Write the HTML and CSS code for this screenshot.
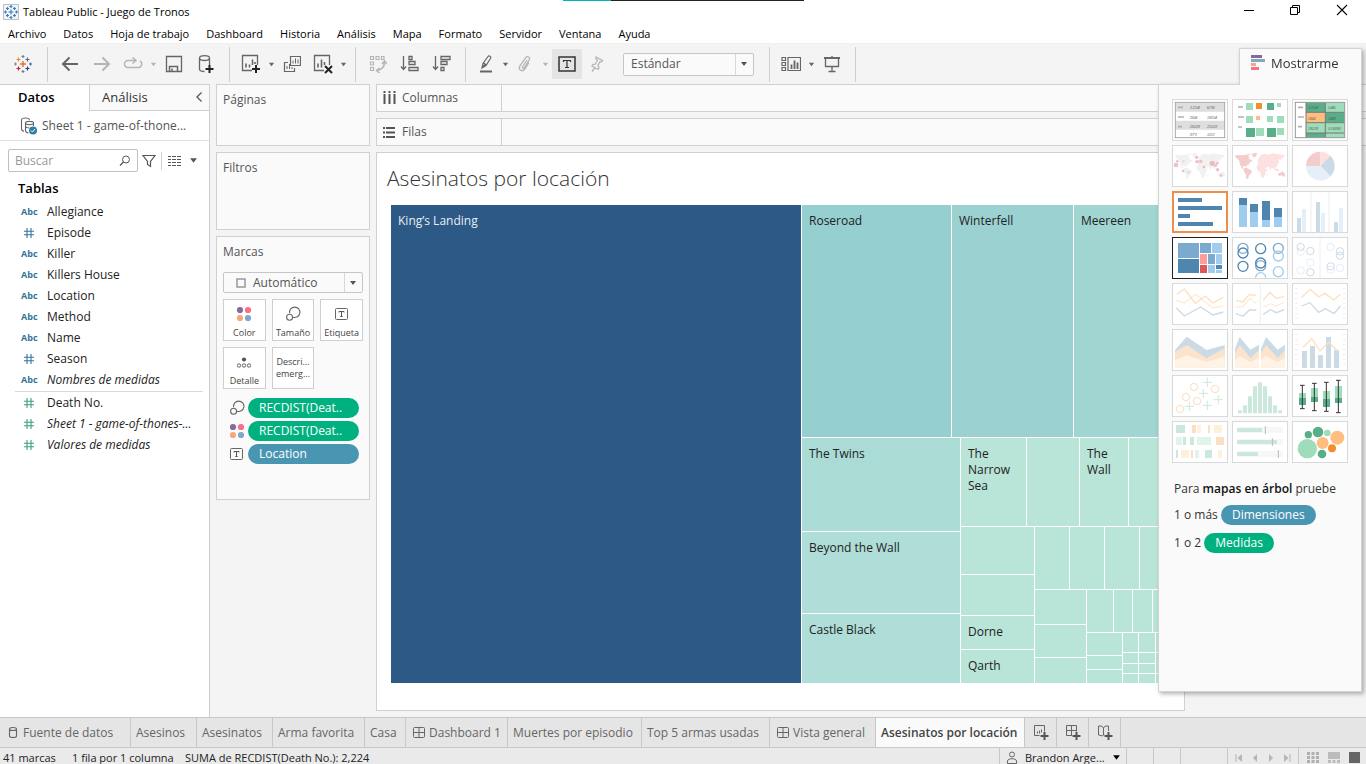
FILE: index.html
```html
<!DOCTYPE html>
<html lang="es">
<head>
<meta charset="utf-8">
<title>Tableau Public - Juego de Tronos</title>
<link rel="stylesheet" href="styles.css">
</head>
<body>
<svg class="defs" width="0" height="0" aria-hidden="true">
  <defs>
    <symbol id="i-hash" viewBox="0 0 12 12"><path d="M4 1v10M8 1v10M1 4.2h10M1 7.8h10" fill="none" stroke="currentColor" stroke-width="1.1"/></symbol>
    <symbol id="i-size" viewBox="0 0 16 16"><g fill="none" stroke="#666" stroke-width="1.1"><path d="M4.6 7.2A5.2 5.2 0 1 1 8 11.2"/><circle cx="4.6" cy="11.3" r="3"/></g></symbol>
    <symbol id="i-color" viewBox="0 0 16 16"><circle cx="4" cy="4" r="3.1" fill="#876a9b"/><circle cx="12" cy="4" r="3.1" fill="#fb6f82"/><circle cx="4" cy="12" r="3.1" fill="#f3a97b"/><circle cx="12" cy="12" r="3.1" fill="#80a6c8"/></symbol>
    <symbol id="i-text" viewBox="0 0 16 16"><rect x="1.5" y="2.5" width="12" height="11" rx="1" fill="none" stroke="#666"/><path d="M5 6.5V5.5h5v1M7.5 5.5v5M6.3 10.5h2.4" fill="none" stroke="#555"/></symbol>
    <symbol id="i-caret" viewBox="0 0 8 8"><path d="M1 2h6L4 6z" fill="currentColor"/></symbol>
    <symbol id="i-grid" viewBox="0 0 12 12"><rect x=".5" y=".5" width="11" height="10" rx="1" fill="none" stroke="#666"/><path d="M6 .5v10M.5 5.5h11" stroke="#666"/></symbol>
    <symbol id="i-world-w" viewBox="0 0 168 126"><path d="M8 34l6-4 14 1 12-2 8 2 4 6-2 5 8 2 4 4-8 4-4 7-6 2-2 6-4-4-6 1 2 7 6 3 2 3-6-1-8-8-4-10-2-10-6-6zM44 26h12l-3 4-8-1zM58 28l10-4 8 1-4 9-7 4-3-6zM36 70l8-2 10 6 6 4-3 8-6 5-2 8-4 4-3-4 0-10-6-9z"/></symbol>
    <symbol id="i-world-e" viewBox="0 0 168 126"><path d="M78 44l6-10 6-6 10-1 10 2 12-4 16 3 20 2-2 5-5 3-3 7-5-4-3 6 2 5-5 4-1 8-6 3-2 9-4-6-5-3-3 10-5-10-4-3-5 6-4-5-2-4-8 1-5-3-6 2 1-6zM74 64l6-5 9 1 8 2 4 9 6 2-6 8-2 9-6 9-4-1-3-10-1-8-7-2-4-6zM104 88l3-2-1 6-3 1z"/></symbol>
    <symbol id="i-world-o" viewBox="0 0 168 126"><path d="M138 86l5-3 6-1 3-3 4 4 4 6-3 6-5-1-4-3-8 2zM128 70l8 3 6 3-3 2-8-3z"/></symbol>
  </defs>
</svg>

<div class="share-strip"></div>

<header class="titlebar">
  <svg class="app-icon" width="16" height="16" viewBox="0 0 16 16" aria-hidden="true"><rect x=".5" y=".5" width="15" height="15" fill="#f2f4f8" stroke="#bcc1c8"/><g stroke="#3b80b8" fill="none" stroke-width="1.2"><path d="M8 5.5v5M5.500 8h5M8 1v3M6.500 2.500h3M8 12v3M6.500 13.500h3M1 8h3M2.500 6.500v3M12 8h3M13.500 6.500v3M4.500 3v3M3 4.500h3M11.500 3v3M10 4.500h3M4.500 10v3M3 11.500h3M11.500 10v3M10 11.500h3"/></g></svg>
  <span class="app-title">Tableau Public - Juego de Tronos</span>
  <div class="window-controls">
    <button aria-label="Minimizar"><svg width="12" height="12"><path d="M1 6.500h10" stroke="#000"/></svg></button>
    <button aria-label="Restaurar"><svg width="12" height="12"><path d="M1.500 3.500h7v7h-7zM3.500 3.500v-2h7v7h-2" fill="none" stroke="#000"/></svg></button>
    <button aria-label="Cerrar"><svg width="12" height="12"><path d="M1 1l10 10M11 1L1 11" stroke="#000" stroke-width="1.100"/></svg></button>
  </div>
</header>

<nav class="menubar" aria-label="Menú">
  <button>Archivo</button><button>Datos</button><button>Hoja de trabajo</button><button>Dashboard</button><button>Historia</button><button>Análisis</button><button>Mapa</button><button>Formato</button><button>Servidor</button><button>Ventana</button><button>Ayuda</button>
</nav>

<div class="toolbar" role="toolbar" aria-label="Herramientas">
  <div class="tool-group home">
    <button class="tool" aria-label="Página de inicio"><svg width="18" height="18" viewBox="0 0 18 18"><g fill="none" stroke-width="1.200"><path d="M9 6v6M6 9h6" stroke="#e8762d" stroke-width="1.500"/><path d="M4.500 2.500v4M2.500 4.500h4" stroke="#e98b3e"/><path d="M13.500 2.500v4M11.500 4.500h4" stroke="#5b6591"/><path d="M4.500 11.500v4M2.500 13.500h4" stroke="#c72035"/><path d="M13.500 11.500v4M11.500 13.500h4" stroke="#1f457e"/><path d="M9 0v3M7.500 1.500h3" stroke="#59879b"/><path d="M9 15v3M7.500 16.500h3" stroke="#59879b"/><path d="M0 9h3M1.500 7.500v3" stroke="#7099a6"/><path d="M15 9h3M16.500 7.500v3" stroke="#5b6591"/></g></svg></button>
  </div>
  <div class="tool-group">
    <button class="tool" aria-label="Deshacer"><svg width="18" height="16"><path d="M17 8H2M8.500 1.500L2 8l6.500 6.500" fill="none" stroke="#666" stroke-width="2"/></svg></button>
    <button class="tool dim" aria-label="Rehacer"><svg width="18" height="16"><path d="M1 8h15M9.500 1.500L16 8l-6.500 6.500" fill="none" stroke="#b5b5b5" stroke-width="2"/></svg></button>
    <button class="tool split" aria-label="Repetir"><svg width="20" height="14"><path d="M12 3.500H5a3.500 3.500 0 0 0 0 7h10a3.500 3.500 0 0 0 2-6.500M9.500.5l3.500 3-3.500 3" fill="none" stroke="#b5b5b5" stroke-width="1.500"/></svg></button>
    <button class="caret dim" aria-label="Opciones de repetir"><svg width="7" height="7"><use href="#i-caret"/></svg></button>
    <button class="tool" aria-label="Guardar"><svg width="18" height="18"><path d="M1.500 1.500h15v15h-15z" fill="none" stroke="#666" stroke-width="1.300"/><path d="M4.500 16v-4.500h8V16M7 16v-2.500" fill="none" stroke="#666" stroke-width="1.500"/></svg></button>
    <button class="tool" aria-label="Nueva fuente de datos"><svg width="18" height="20"><path d="M2.500 4v11c0 1.500 2 2.500 5 2.500M12.500 4v7M2.500 4c0-3.300 10-3.300 10 0s-10 3.300-10 0" fill="none" stroke="#666" stroke-width="1.300"/><path d="M12.500 11v8M8.500 15h8" stroke="#222" stroke-width="2"/></svg></button>
  </div>
  <div class="tool-group">
    <button class="tool split" aria-label="Nueva hoja de trabajo"><svg width="20" height="20"><path d="M11 16.500H1.500v-15h15V11" fill="none" stroke="#666" stroke-width="1.300"/><path d="M5 13.500v-4M8.500 13.500v-3M11.500 11V5.500M14 10V8" stroke="#666" stroke-width="1.600"/><path d="M15 11v8M11 15h8" stroke="#222" stroke-width="2"/></svg></button>
    <button class="caret" aria-label="Opciones de hoja"><svg width="7" height="7"><use href="#i-caret"/></svg></button>
    <button class="tool" aria-label="Duplicar"><svg width="18" height="18"><path d="M7.500 1.500h10v9h-10zM5 7.500H1.500v9h10V13" fill="none" stroke="#666" stroke-width="1.200"/><path d="M10 8.500v-3M12.500 8.500v-5M15 8.500v-4M4 14v-3M6.500 14V9M9 14v-2" stroke="#666"/></svg></button>
    <button class="tool split" aria-label="Borrar hoja"><svg width="20" height="20"><path d="M11 16.500H1.500v-15h15V11" fill="none" stroke="#666" stroke-width="1.300"/><path d="M5 13.500v-4M8.500 13.500v-8M11.500 11V8" stroke="#666" stroke-width="1.600"/><path d="M12 12l7 7M19 12l-7 7" stroke="#222" stroke-width="2"/></svg></button>
    <button class="caret" aria-label="Opciones de borrar"><svg width="7" height="7"><use href="#i-caret"/></svg></button>
  </div>
  <div class="tool-group">
    <button class="tool" aria-label="Intercambiar"><svg width="18" height="18"><g fill="none" stroke="#b5b5b5" stroke-width="1.200"><path d="M1.500 1.500h3v3h-3zM7 1.500h3v3H7zM12.500 1.500h2.500v3h-2.500zM1.500 7h3v3h-3zM1.500 12.500h3v3h-3z"/><path d="M15.500 7c0 5-3 8-8 8.500M13 9l2.500-3L18 9M10.500 13l-3 2.500 3 2.500" stroke-width="1.500"/></g></svg></button>
    <button class="tool" aria-label="Orden ascendente"><svg width="20" height="18"><g fill="none" stroke="#666" stroke-width="1.300"><path d="M3.500 1v13M1 11.500l2.500 3 2.500-3"/><path d="M9 1.500h3v3H9zM9 6.500h6v3H9zM9 12.500h9v3H9z"/></g></svg></button>
    <button class="tool" aria-label="Orden descendente"><svg width="20" height="18"><g fill="none" stroke="#666" stroke-width="1.300"><path d="M3.500 1v13M1 11.500l2.500 3 2.500-3"/><path d="M9 1.500h9v3H9zM9 6.500h6v3H9zM9 12.500h3v3H9z"/></g></svg></button>
  </div>
  <div class="tool-group">
    <button class="tool tight" aria-label="Resaltar"><svg width="16" height="20"><path d="M4 14l1-4.500L10 2.500c1-1.400 3.500.3 2.600 1.800L8 11.500zM5.500 9l3 2M4 14l3.500-4" fill="none" stroke="#666" stroke-width="1.200"/><path d="M2 17.500h12" stroke="#666" stroke-width="2"/></svg></button>
    <button class="caret" aria-label="Opciones de resaltar"><svg width="7" height="7"><use href="#i-caret"/></svg></button>
    <button class="tool split" aria-label="Agrupar"><svg width="16" height="18"><path d="M10 5l-4.500 7c-.6 1.200 1 2 1.700 1l5-8c1.500-2.600-2-4.800-3.600-2.200L2.800 11c-2 3.600 2.700 6.600 5 3.200L12 7.500" fill="none" stroke="#b5b5b5" stroke-width="1.300"/></svg></button>
    <button class="caret dim" aria-label="Opciones de agrupar"><svg width="7" height="7"><use href="#i-caret"/></svg></button>
    <button class="tool active" aria-label="Mostrar etiquetas"><svg width="18" height="16"><path d="M1 1h16v14H1z" fill="none" stroke="#333" stroke-width="1.500"/><path d="M5.500 6V4.500h7V6M9 4.500v7M7 11.500h4" fill="none" stroke="#333" stroke-width="1.200"/></svg></button>
    <button class="tool pin" aria-label="Fijar ejes"><svg width="14" height="18"><path d="M6 2l6.500 3.500-1 1.500-1.500-.5-2 4 1 2.500-1 1.500L2 11l.8-1.600 2.600-.2 2-4L6 3.700zM5 12.500L2 16.500" fill="none" stroke="#b5b5b5" stroke-width="1.300"/></svg></button>
    <div class="select-box fit">
      <select aria-label="Ajuste"><option>Estándar</option></select>
      <svg width="8" height="8"><use href="#i-caret"/></svg>
    </div>
  </div>
  <div class="tool-group last">
    <button class="tool split" aria-label="Tarjetas"><svg width="20" height="16"><g fill="none" stroke="#666" stroke-width="1.200"><path d="M1 1.500h3.500v3H1zM1 6.500h3.500v3H1zM1 11.500h3.500v3H1zM7 1.500h12.500v13H7z"/><path d="M10.500 13V8.500M13.500 13V4.500M16.500 13V6.500" stroke-width="1.800"/></g></svg></button>
    <button class="caret" aria-label="Opciones de tarjetas"><svg width="7" height="7"><use href="#i-caret"/></svg></button>
    <button class="tool" aria-label="Presentación"><svg width="18" height="18"><path d="M1 3h16" stroke="#666" stroke-width="2"/><path d="M2.500 4v7.500h13V4M9 1v2M9 11.500v5M5.500 16.500h7" fill="none" stroke="#666" stroke-width="1.300"/></svg></button>
  </div>
</div>

<main class="workspace">
  <aside class="data-pane">
    <div class="pane-tabs">
      <button class="pane-tab selected">Datos</button>
      <button class="pane-tab other">Análisis <svg width="8" height="12"><path d="M6.500 1.500L2 6l4.500 4.500" fill="none" stroke="#555" stroke-width="1.300"/></svg></button>
    </div>
    <button class="source"><svg width="18" height="18"><g fill="none" stroke="#666" stroke-width="1.100"><path d="M1.500 3v9c0 1.200 1 2 2.500 2.300M1.500 3c0-2.600 8-2.600 8 0M5.500 6v7.500c0 1.300 1.200 2.200 3 2.500M5.500 6c0-2.200 8-2.200 8 0s-8 2.200-8 0M13.500 6v3M5.500 9.500c.5 1 2 1.500 4 1.500"/></g><circle cx="13" cy="13.500" r="4" fill="#2f7ea3"/><path d="M11 13.500l1.500 1.500 2.500-3" fill="none" stroke="#fff"/></svg><span>Sheet 1 - game-of-thone...</span></button>
    <div class="search-row">
      <label class="search"><input type="text" placeholder="Buscar" aria-label="Buscar"><svg width="12" height="12"><circle cx="7" cy="4.500" r="3.500" fill="none" stroke="#555"/><path d="M4.500 7L1 10.500" stroke="#555" stroke-width="1.300"/></svg></label>
      <button class="plain" aria-label="Filtrar"><svg width="14" height="14"><path d="M1 1.500h12L8.500 7.500v5l-3-2v-3z" fill="none" stroke="#555" stroke-width="1.200"/></svg></button>
      <span class="bar"></span>
      <button class="plain" aria-label="Vista"><svg width="13" height="12"><path d="M0 1.500h13M0 4.500h13M0 7.500h13M0 10.500h13" stroke="#555" stroke-dasharray="3 1 4 1 4"/></svg></button>
      <button class="plain more" aria-label="Más"><svg width="9" height="9"><use href="#i-caret"/></svg></button>
    </div>
    <h2>Tablas</h2>
    <ul class="fields">
      <li><b>Abc</b>Allegiance</li>
      <li><i class="hash"><svg width="12" height="12"><use href="#i-hash"/></svg></i>Episode</li>
      <li><b>Abc</b>Killer</li>
      <li><b>Abc</b>Killers House</li>
      <li><b>Abc</b>Location</li>
      <li><b>Abc</b>Method</li>
      <li><b>Abc</b>Name</li>
      <li><i class="hash"><svg width="12" height="12"><use href="#i-hash"/></svg></i>Season</li>
      <li><b>Abc</b><em>Nombres de medidas</em></li>
    </ul>
    <ul class="fields measures">
      <li><i class="hash"><svg width="12" height="12"><use href="#i-hash"/></svg></i>Death No.</li>
      <li><i class="hash"><svg width="12" height="12"><use href="#i-hash"/></svg></i><em>Sheet 1 - game-of-thones-...</em></li>
      <li><i class="hash"><svg width="12" height="12"><use href="#i-hash"/></svg></i><em>Valores de medidas</em></li>
    </ul>
  </aside>

  <section class="cards">
    <div class="card pages"><h3>Páginas</h3></div>
    <div class="card filters"><h3>Filtros</h3></div>
    <div class="card marks">
      <h3>Marcas</h3>
      <div class="select-box mark-type">
        <svg class="square" width="10" height="10"><path d="M1 1h8v8H1z" fill="none" stroke="#999" stroke-width="1.500"/></svg>
        <select aria-label="Tipo de marca"><option>Automático</option></select>
        <svg width="8" height="8"><use href="#i-caret"/></svg>
      </div>
      <div class="mark-buttons">
        <button><svg width="16" height="16"><use href="#i-color"/></svg>Color</button>
        <button><svg width="16" height="16"><use href="#i-size"/></svg>Tamaño</button>
        <button><svg width="16" height="16"><use href="#i-text"/></svg>Etiqueta</button>
        <button><svg width="16" height="16"><g fill="none" stroke="#666"><circle cx="3" cy="11.500" r="1.700"/><circle cx="8" cy="11.500" r="1.700"/><circle cx="13" cy="11.500" r="1.700"/></g><circle cx="8" cy="5.500" r="2.100" fill="#555"/></svg>Detalle</button>
        <button class="text-only">Descri...<br>emerg...</button>
      </div>
      <ul class="pills">
        <li><svg width="16" height="16"><use href="#i-size"/></svg><span class="pill green">RECDIST(Deat..</span></li>
        <li><svg width="16" height="16"><use href="#i-color"/></svg><span class="pill green">RECDIST(Deat..</span></li>
        <li><svg width="16" height="16"><use href="#i-text"/></svg><span class="pill blue">Location</span></li>
      </ul>
    </div>
  </section>

  <section class="sheet">
    <div class="shelf"><h3><svg width="14" height="14"><path d="M2.500 0v2M7.500 0v2M12.500 0v2M2.500 3v10M7.500 3v10M12.500 3v10" stroke="#555" stroke-width="2"/></svg>Columnas</h3></div>
    <div class="shelf"><h3><svg width="14" height="14"><path d="M1 3h2M1 7.500h2M1 12h2M4 3h9M4 7.500h9M4 12h9" stroke="#555" stroke-width="2"/></svg>Filas</h3></div>
    <div class="canvas">
      <h1>Asesinatos por locación</h1>
      <div class="treemap">
        <div class="cell navy" style="flex-grow:410"><span>King’s Landing</span></div>
        <div class="col" style="flex-grow:372">
          <div class="row" style="flex-grow:232">
            <div class="cell t1" style="flex-grow:149"><span>Roseroad</span></div>
            <div class="cell t2" style="flex-grow:121"><span>Winterfell</span></div>
            <div class="cell t3" style="flex-grow:100"><span>Meereen</span></div>
          </div>
          <div class="row" style="flex-grow:245">
            <div class="col" style="flex-grow:158">
              <div class="cell t4" style="flex-grow:93"><span>The Twins</span></div>
              <div class="cell t5" style="flex-grow:81"><span>Beyond the Wall</span></div>
              <div class="cell t5" style="flex-grow:69"><span>Castle Black</span></div>
            </div>
            <div class="col" style="flex-grow:213">
              <div class="row" style="flex-grow:88">
                <div class="cell" style="flex-grow:65"><span>The Narrow Sea</span></div>
                <div class="cell" style="flex-grow:52"></div>
                <div class="cell" style="flex-grow:48"><span>The Wall</span></div>
                <div class="cell" style="flex-grow:45"></div>
              </div>
              <div class="row" style="flex-grow:156">
                <div class="col" style="flex-grow:73">
                  <div class="cell" style="flex-grow:47"></div>
                  <div class="cell" style="flex-grow:40"></div>
                  <div class="cell" style="flex-grow:33"><span>Dorne</span></div>
                  <div class="cell" style="flex-grow:33"><span>Qarth</span></div>
                </div>
                <div class="col" style="flex-grow:139">
                  <div class="row" style="flex-grow:62">
                    <div class="cell" style="flex-grow:34"></div>
                    <div class="cell" style="flex-grow:34"></div>
                    <div class="cell" style="flex-grow:34"></div>
                    <div class="cell" style="flex-grow:34"></div>
                  </div>
                  <div class="row" style="flex-grow:93">
                    <div class="col" style="flex-grow:51">
                      <div class="cell" style="flex-grow:34"></div>
                      <div class="cell" style="flex-grow:32"></div>
                      <div class="cell" style="flex-grow:25"></div>
                    </div>
                    <div class="col" style="flex-grow:87">
                      <div class="row" style="flex-grow:42">
                        <div class="cell" style="flex-grow:26"></div>
                        <div class="cell" style="flex-grow:18"></div>
                        <div class="cell" style="flex-grow:19"></div>
                        <div class="cell" style="flex-grow:21"></div>
                      </div>
                      <div class="row" style="flex-grow:50">
                        <div class="col" style="flex-grow:35">
                          <div class="cell" style="flex-grow:22"></div>
                          <div class="cell" style="flex-grow:13"></div>
                          <div class="cell" style="flex-grow:13"></div>
                        </div>
                        <div class="col" style="flex-grow:15">
                          <div class="cell" style="flex-grow:19"></div>
                          <div class="cell" style="flex-grow:10"></div>
                          <div class="cell" style="flex-grow:9"></div>
                          <div class="cell" style="flex-grow:9"></div>
                        </div>
                        <div class="col" style="flex-grow:16">
                          <div class="cell" style="flex-grow:19"></div>
                          <div class="cell" style="flex-grow:10"></div>
                          <div class="cell" style="flex-grow:9"></div>
                          <div class="cell" style="flex-grow:9"></div>
                        </div>
                        <div class="col" style="flex-grow:18">
                          <div class="cell" style="flex-grow:19"></div>
                          <div class="cell" style="flex-grow:20"></div>
                          <div class="cell" style="flex-grow:9"></div>
                        </div>
                      </div>
                    </div>
                  </div>
                </div>
              </div>
            </div>
          </div>
        </div>
      </div>
    </div>
  </section>
</main>

<section class="show-me">
  <button class="show-me-tab"><svg width="14" height="16"><path d="M0 0h11v3H0z" fill="#876a9b"/><path d="M0 4h14v3H0z" fill="#80a6c8"/><path d="M0 8h5v3H0z" fill="#f3a97b"/><path d="M0 12h8v3H0z" fill="#fb6f82"/></svg>Mostrarme</button>
  <div class="show-me-body">
    <div class="thumbs">
      <button aria-label="Tabla de texto"><svg viewBox="0 0 168 126"><rect x="10" y="10" width="148" height="106" fill="#fff"/><path d="M10 11h148v27H10zM10 65h148v27H10z" fill="#dedede"/><rect x="10" y="10" width="148" height="106" fill="none" stroke="#a9a9a9" stroke-width="3"/><path d="M18 25h15M18 54h18M18 83h12" stroke="#b0b0b0" stroke-width="5"/><g class="tiny"><text x="53" y="31">1234</text><text x="105" y="31">678</text><text x="53" y="59">368</text><text x="105" y="59">3034</text><text x="53" y="86">2620</text><text x="105" y="86">2559</text><text x="53" y="110">971</text><text x="105" y="110">322</text></g></svg></button>
      <button aria-label="Mapa de calor"><svg viewBox="0 0 168 126"><path d="M18 24h15M18 54h18M18 84h12" stroke="#b0b0b0" stroke-width="5"/><path d="M42 12h21v21H42zM135 12h12v12h-12zM42 51h21v21H42zM105 51h18v18h-18zM135 51h21v21h-21zM72 87h24v24H72zM135 87h21v21h-21z" fill="#9fdcb9"/><path d="M105 12h21v21h-21zM42 87h27v27H42zM105 87h27v27h-27z" fill="#58ae89"/><path d="M72 12h18v18H72z" fill="#f28e2b"/><path d="M72 51h12v12H72z" fill="#ffbe7d"/></svg></button>
      <button aria-label="Tabla resaltada"><svg viewBox="0 0 168 126"><path d="M42 10h58v30H42zM100 40h58v30h-58zM42 102h58v14H42z" fill="#58ae89"/><path d="M100 10h58v30h-58zM42 70h58v32H42zM100 70h58v32h-58zM100 102h58v14h-58z" fill="#9fdcb9"/><path d="M42 40h58v30H42z" fill="#ffbe7d"/><path d="M42 11v105M100 11v105M42 40h116M42 71h116M42 102h116" stroke="#777" stroke-width="3"/><rect x="10" y="10" width="148" height="106" fill="none" stroke="#999" stroke-width="3"/><path d="M18 25h15M18 54h18M18 83h12" stroke="#b0b0b0" stroke-width="5"/><g class="tiny"><text x="48" y="31">1234</text><text x="108" y="31">546</text><text x="48" y="62">368</text><text x="108" y="62">340</text><text x="48" y="92">2620</text><text x="108" y="92">51890</text></g></svg></button>

      <button aria-label="Mapa de símbolos"><svg viewBox="0 0 168 126"><g fill="#f1f1f1"><use href="#i-world-w"/><use href="#i-world-e"/><use href="#i-world-o"/></g><g fill="#e8a5ae" opacity=".7"><circle cx="12" cy="60" r="7"/><circle cx="16" cy="49" r="4"/><circle cx="34" cy="49" r="4" fill="#f6c9ce"/><circle cx="33" cy="78" r="4"/><circle cx="50" cy="82" r="5" fill="#f9d0d4"/><circle cx="74" cy="37" r="5"/><circle cx="75" cy="50" r="5"/><circle cx="86" cy="49" r="5"/><circle cx="96" cy="66" r="4"/><circle cx="121" cy="55" r="8"/><circle cx="131" cy="62" r="4"/><circle cx="136" cy="55" r="4"/><circle cx="137" cy="74" r="5"/><circle cx="147" cy="92" r="4"/></g></svg></button>
      <button aria-label="Mapa"><svg viewBox="0 0 168 126"><use href="#i-world-w" fill="#f3cdcb"/><use href="#i-world-e" fill="#fde0e0"/><use href="#i-world-o" fill="#f3cdcb"/></svg></button>
      <button aria-label="Gráfico circular"><svg viewBox="0 0 168 126"><path d="M85 63H42A43 43 0 0 1 85 20z" fill="#f3cdcb"/><path d="M85 63V20A43 43 0 0 1 115.400 32.600z" fill="#fde0e0"/><path d="M85 63L115.400 32.600A43 43 0 0 1 115.400 93.400z" fill="#cbdbe6"/><path d="M85 63L115.400 93.400A43 43 0 0 1 42 63z" fill="#e4effa"/></svg></button>

      <button class="recommended" aria-label="Barras horizontales"><svg viewBox="0 0 168 126"><path d="M18 27h72M18 51h132M18 75h36M18 99h105" stroke="#4f86b0" stroke-width="12"/></svg></button>
      <button aria-label="Barras apiladas"><svg viewBox="0 0 168 126"><path d="M21 42h24v66H21zM54 63h24v45H54zM90 87h24v21H90zM126 78h24v30h-24z" fill="#a0cdee"/><path d="M21 21h24v21H21zM54 39h24v24H54zM90 30h24v57H90zM126 51h24v27h-24z" fill="#4f86b0"/></svg></button>
      <button aria-label="Barras en paralelo"><svg viewBox="0 0 168 126"><path d="M57 3v120M111 3v120" stroke="#eee" stroke-width="3"/><path d="M15 81h12v42H15zM72 33h12v90H72zM126 93h12v30h-12z" fill="#cbdbe6"/><path d="M30 54h12v69H30zM87 66h12v57H87zM141 51h12v72h-12z" fill="#e4effa"/></svg></button>

      <button class="current" aria-label="Mapa en árbol"><svg viewBox="0 0 168 126"><path d="M18 18h63v45H18zM84 18h33v30H84zM108 51h21v30h-21z" fill="#7baad0"/><path d="M18 66h63v42H18zM132 84h18v12h-18z" fill="#4f86b0"/><path d="M120 18h30v30h-30zM132 51h18v30h-18zM108 84h21v24h-21zM132 99h18v9h-18z" fill="#a0cdee"/><path d="M84 51h21v30H84z" fill="#ff9d9a"/><path d="M84 84h21v24H84z" fill="#e15759"/></svg></button>
      <button aria-label="Vistas de círculos"><svg viewBox="0 0 168 126"><g fill="none" stroke-width="4"><g stroke="#7baad0"><circle cx="33" cy="34" r="15"/><circle cx="139" cy="34" r="15"/><circle cx="86" cy="86" r="15"/></g><g stroke="#a0cdee"><circle cx="139" cy="57" r="15"/><circle cx="139" cy="104" r="15"/><path d="M71 122a15 15 0 0 1 30 0"/></g><g stroke="#4f86b0"><circle cx="33" cy="48" r="15"/><circle cx="33" cy="88" r="15"/><circle cx="86" cy="35" r="15"/><circle cx="86" cy="78" r="15"/></g></g></svg></button>
      <button aria-label="Círculos en paralelo"><svg viewBox="0 0 168 126"><path d="M84 3v120" stroke="#eee" stroke-width="3"/><g fill="none" stroke-width="3"><g stroke="#e4effa"><circle cx="26" cy="44" r="11"/><circle cx="26" cy="100" r="11"/><circle cx="55" cy="77" r="11"/><circle cx="116" cy="30" r="11"/><circle cx="116" cy="98" r="11"/><circle cx="144" cy="93" r="11"/></g><g stroke="#cbdbe6"><circle cx="26" cy="30" r="11"/><circle cx="55" cy="42" r="11"/><circle cx="55" cy="106" r="11"/><circle cx="144" cy="43" r="11"/><circle cx="144" cy="56" r="11"/><circle cx="116" cy="88" r="11"/></g></g></svg></button>

      <button aria-label="Líneas continuas"><svg viewBox="0 0 168 126"><g fill="none" stroke-width="4"><path d="M13 52l24 8 34-26 51 41 32-6" stroke="#ffecd6"/><path d="M15 34L37 18l33 43 30-22 22 21 32-17" stroke="#fce0c0"/><path d="M13 75l24 24 49-27 37 24 31-9" stroke="#cbdbe6"/></g></svg></button>
      <button aria-label="Líneas discretas"><svg viewBox="0 0 168 126"><path d="M85 3v120" stroke="#eee" stroke-width="3"/><g fill="none" stroke-width="4"><path d="M12 72l21-2 21-24 19 15M94 72l23-9 16 6 24-12" stroke="#ffecd6"/><path d="M12 52l21 5 18-22 22 2M94 51l20-23 18 18 25-5" stroke="#fce0c0"/><path d="M12 92l21 8 19-19h21M94 94l21-14 18 9 24-9" stroke="#cbdbe6"/></g></svg></button>
      <button aria-label="Líneas dobles"><svg viewBox="0 0 168 126"><path d="M13 15v96M157 15v96" stroke="#eee" stroke-width="8" stroke-dasharray="3 12"/><g fill="none" stroke-width="4"><path d="M28 44l26-25 26 23 18-11 28 20 19-17" stroke="#fce0c0"/><path d="M28 69l26-10 26 29 20-11 26 15 19-23" stroke="#cbdbe6"/></g></svg></button>

      <button aria-label="Áreas continuas"><svg viewBox="0 0 168 126"><path d="M9 63l35-40 60 40 54-15v68H9z" fill="#cbdbe6"/><path d="M9 68l35-20 60 40 54-30v58H9z" fill="#fce4cc"/><path d="M9 94l35-15 60 20 54-17v34H9z" fill="#fff3e6"/></svg></button>
      <button aria-label="Áreas discretas"><svg viewBox="0 0 168 126"><path d="M9 60l14-36 32 38 26-15v69H9zM87 60l15-36 35 38 22-15v69H87z" fill="#cbdbe6"/><path d="M9 72l14-24 32 39 26-24v53H9zM87 72l15-24 35 39 22-24v53H87z" fill="#fce4cc"/><path d="M9 93l14-12 32 18 26-12v29H9zM87 93l15-12 35 18 22-12v29H87z" fill="#fff3e6"/></svg></button>
      <button aria-label="Combinación doble"><svg viewBox="0 0 168 126"><path d="M13 15v96M157 15v96" stroke="#eee" stroke-width="8" stroke-dasharray="3 12"/><path d="M30 66h15v51H30zM54 51h15v66H54zM78 78h15v39H78zM102 24h15v93h-15zM126 63h15v54h-15z" fill="#cbdbe6"/><path d="M33 55l26-26 25 37 26-26 26 25" fill="none" stroke="#fce0c0" stroke-width="4"/></svg></button>

      <button aria-label="Diagrama de dispersión"><svg viewBox="0 0 168 126"><g fill="none" stroke-width="4"><g stroke="#fce4cc"><circle cx="66" cy="36" r="11"/><circle cx="129" cy="42" r="11"/><circle cx="42" cy="66" r="11"/><circle cx="75" cy="78" r="11"/><circle cx="24" cy="102" r="11"/></g><path d="M106 8v28M92 22h28M94 41v28M80 55h28M139 60v28M125 74h28M52 80v28M38 94h28M106 77v28M92 91h28" stroke="#cce9dd" stroke-width="3"/></g></svg></button>
      <button aria-label="Histograma"><svg viewBox="0 0 168 126"><path d="M18 106h12v9H18zM33 91h12v24H33zM48 64h12v51H48zM63 34h12v81H63zM78 22h12v93H78zM93 34h12v81H93zM108 64h12v51h-12zM123 91h12v24h-12zM138 106h12v9h-12z" fill="#cbe8dc"/></svg></button>
      <button aria-label="Diagrama de caja"><svg viewBox="0 0 168 126"><path d="M21 54h21v15H21zM57 39h21v27H57zM93 48h21v24H93zM129 33h21v36h-21z" fill="#9fdcb9"/><path d="M21 69h21v21H21zM57 66h21v15H57zM93 72h21v24H93zM129 69h21v15h-21z" fill="#58ae89"/><path d="M31 31v70M24 31h14M24 101h14M67 25v82M60 25h14M60 107h14M103 22v87M96 22h14M96 109h14M139 16v97M132 16h14M132 113h14" stroke="#333" stroke-width="3"/></svg></button>

      <button aria-label="Gantt"><svg viewBox="0 0 168 126"><path d="M12 12h27v24H12zM33 48h9v24h-9zM54 48h12v24H54zM12 87h6v24h-6zM99 87h21v24H99z" fill="#cbe8dc"/><path d="M12 48h18v24H12zM75 48h42v24H75zM69 87h12v24H69z" fill="#e0f4ea"/><path d="M60 12h12v24H60zM108 12h6v24h-6zM132 48h24v24h-24zM57 87h6v24h-6z" fill="#fbdfc2"/><path d="M75 12h12v24H75zM126 12h24v24h-24zM27 87h24v24H27zM138 87h12v24h-12z" fill="#ffefdc"/></svg></button>
      <button aria-label="Gráficos de viñetas"><svg viewBox="0 0 168 126"><path d="M15 18h138v18H15zM15 54h138v18H15zM15 90h138v18H15z" fill="#f7f7f8"/><path d="M15 27h75M15 63h120M15 99h63" stroke="#cbe8dc" stroke-width="12"/><path d="M100 15v24M121 51v24M139 87v24" stroke="#bbb" stroke-width="3"/></svg></button>
      <button aria-label="Burbujas"><svg viewBox="0 0 168 126"><g fill="#58ae89"><circle cx="49" cy="41" r="11"/><circle cx="78" cy="33" r="16"/><circle cx="90" cy="99" r="13"/></g><g fill="#9fdcb9"><circle cx="46" cy="83" r="29"/><circle cx="106" cy="36" r="10"/></g><g fill="#ffbe7d"><circle cx="136" cy="50" r="21"/><circle cx="92" cy="66" r="18"/></g><circle cx="120" cy="82" r="12" fill="#f28e2b"/></svg></button>
    </div>
    <p>Para <strong>mapas en árbol</strong> pruebe</p>
    <p>1 o más <span class="pill blue">Dimensiones</span></p>
    <p>1 o 2 <span class="pill green">Medidas</span></p>
  </div>
</section>

<nav class="sheet-tabs" aria-label="Hojas">
  <button class="with-icon"><svg width="12" height="13"><path d="M2.500 3v7c0 2 7 2 7 0V3c0-2-7-2-7 0s7 2 7 0" fill="none" stroke="#666" stroke-width="1.100"/></svg>Fuente de datos</button>
  <button>Asesinos</button>
  <button>Asesinatos</button>
  <button>Arma favorita</button>
  <button>Casa</button>
  <button class="with-icon"><svg width="12" height="12"><use href="#i-grid"/></svg>Dashboard 1</button>
  <button>Muertes por episodio</button>
  <button>Top 5 armas usadas</button>
  <button class="with-icon"><svg width="12" height="12"><use href="#i-grid"/></svg>Vista general</button>
  <button class="on">Asesinatos por locación</button>
  <button class="add" aria-label="Nueva hoja"><svg width="16" height="16"><path d="M6.500 10.500h-5v-10h10v6" fill="none" stroke="#666"/><path d="M4.500 8.500v-2M6.500 8.500v-3M8.500 7.500v-3" stroke="#666"/><path d="M11.500 7v8M7.500 11h8" stroke="#555" stroke-width="2"/></svg></button>
  <button class="add" aria-label="Nuevo dashboard"><svg width="16" height="16"><path d="M7 10.500H1.500v-10h10v6M6.500.5v10M1.500 5.500h10" fill="none" stroke="#666"/><path d="M11.500 7v8M7.500 11h8" stroke="#555" stroke-width="2"/></svg></button>
  <button class="add" aria-label="Nueva historia"><svg width="16" height="16"><path d="M7 9.500l-1.500 1.500-4-1v-9l2.500 0 2.500 1.500L9 1h2.500V6M6.500 2.500V10" fill="none" stroke="#666"/><path d="M11.500 7v8M7.500 11h8" stroke="#555" stroke-width="2"/></svg></button>
  <span></span>
</nav>

<footer class="status">
  <span class="marks-count">41 marcas</span><span class="dims">1 fila por 1 columna</span><span>SUMA de RECDIST(Death No.): 2,224</span>
  <button class="user"><svg width="12" height="14"><circle cx="6" cy="3.500" r="2.500" fill="none" stroke="#666"/><path d="M1.500 12.500V10c0-3 9-3 9 0v2.500z" fill="none" stroke="#666"/></svg><span>Brandon Arge...</span><svg class="drop" width="9" height="9"><use href="#i-caret"/></svg></button>
  <span class="slot"></span><span class="slot"></span><span class="slot wide"></span>
  <div class="pager">
    <button aria-label="Primera"><svg width="8" height="8"><path d="M1 0v8" stroke="#b5b5b5"/><path d="M7 0v8L2.500 4z" fill="#b5b5b5"/></svg></button>
    <button aria-label="Anterior"><svg width="8" height="8"><path d="M6 0v8L2 4z" fill="#b5b5b5"/></svg></button>
    <button aria-label="Siguiente"><svg width="8" height="8"><path d="M2 0v8l4-4z" fill="#b5b5b5"/></svg></button>
    <button aria-label="Última"><svg width="8" height="8"><path d="M7 0v8" stroke="#b5b5b5"/><path d="M1 0v8l4.500-4z" fill="#b5b5b5"/></svg></button>
  </div>
  <div class="views">
    <button aria-label="Clasificador"><svg width="12" height="12"><path d="M0 1.500h12M0 5.500h12M0 9.500h12" stroke="#b0b0b0" stroke-width="3" stroke-dasharray="3 1.500"/></svg></button>
    <button aria-label="Tira"><svg width="12" height="12"><path d="M0 0h12v7H0z" fill="#bcbcbc"/><path d="M0 9.500h12" stroke="#bcbcbc" stroke-width="3" stroke-dasharray="3 1.500"/></svg></button>
    <button aria-label="Pestañas"><svg width="12" height="12"><path d="M0 0h11v11H0z" fill="#666"/></svg></button>
  </div>
</footer>
</body>
</html>
```
FILE: styles.css
```css
* { box-sizing: border-box; }
body {
  margin: 0;
  height: 100vh;
  display: flex;
  flex-direction: column;
  overflow: hidden;
  position: relative;
  background: #f4f4f4;
  color: #333;
  font: 12px/16px "Open Sans", "Noto Sans", sans-serif;
}
button {
  margin: 0;
  padding: 0;
  border: 0;
  background: none;
  color: inherit;
  font: inherit;
}
svg { display: block; flex: none; }
ul { list-style: none; margin: 0; padding: 0; }
h1, h2, h3, p { margin: 0; font: inherit; }
.defs { position: absolute; }

.share-strip {
  position: absolute;
  top: 0;
  left: 563px;
  width: 241px;
  height: 1px;
  background: linear-gradient(90deg, #00b7bd 48px, #222 48px);
}

/* Title bar and menu */
.titlebar {
  flex: none;
  display: flex;
  align-items: center;
  height: 24px;
  padding-left: 3px;
  background: #fff;
  color: #000;
  font-size: 11px;
}
.app-title { margin-left: 4px; }
.window-controls { display: flex; margin-left: auto; height: 20px; align-self: flex-start; }
.window-controls button { width: 46px; display: flex; align-items: center; justify-content: center; }
.window-controls button:last-child { width: 48px; }
.menubar {
  flex: none;
  display: flex;
  gap: 17px;
  height: 19px;
  padding-left: 8px;
  background: #fff;
  color: #000;
  font-size: 11px;
}

/* Toolbar */
.toolbar {
  flex: none;
  display: flex;
  align-items: center;
  height: 41px;
  border-top: 1px solid #f0f0f0;
  color: #666;
}
.tool-group {
  display: flex;
  align-items: center;
  height: 35px;
  padding: 0 7px 0 6px;
  border-right: 1px solid #cfcfcf;
}
.tool-group.home { padding: 0 8px 0 7px; }
.tool-group.last { padding-right: 7px; }
.tool {
  width: 32px;
  height: 30px;
  display: flex;
  align-items: center;
  justify-content: center;
}
.tool.split, .tool.active, .tool.pin { width: 30px; }
.tool.tight { width: 28px; }
.tool.active { background: #e4e4e4; margin-left: 2px; }
.caret { width: 10px; height: 30px; display: flex; align-items: center; justify-content: center; }
.caret.dim { color: #b5b5b5; }

.select-box {
  display: flex;
  align-items: center;
  position: relative;
  border: 1px solid #c6c6c6;
  border-radius: 2px;
  background: #fafafa;
  color: #555;
}
.select-box select {
  flex: 1;
  min-width: 0;
  height: 100%;
  padding: 0 18px 0 7px;
  margin-right: -18px;
  border: 0;
  appearance: none;
  background: linear-gradient(#d8d8d8, #d8d8d8) right 17px top / 1px 100% no-repeat;
  color: inherit;
  font: inherit;
}
.select-box > svg:last-child { margin-right: 5px; margin-left: 5px; pointer-events: none; }
.select-box.fit { width: 131px; height: 23px; margin: 0 8px 0 11px; }
.select-box.mark-type { height: 21px; }
.mark-type .square { margin-left: 12px; }

/* Workspace */
.workspace { flex: 1; min-height: 0; display: flex; }
.data-pane {
  flex: none;
  width: 210px;
  background: #fff;
  border-right: 1px solid #d0d0d0;
}
.pane-tabs { display: flex; height: 27px; font-size: 13px; border-top: 1px solid #d0d0d0; }
.pane-tab { padding-bottom: 2px; }
.pane-tab.selected { width: 89px; padding-left: 18px; text-align: left; font-weight: 600; color: #000; }
.pane-tab.other {
  flex: 1;
  display: flex;
  align-items: center;
  justify-content: space-between;
  padding: 0 6px 1px 12px;
  border: solid #d0d0d0;
  border-width: 0 0 1px 1px;
  background: #f9f9f9;
}
.source {
  display: flex;
  align-items: center;
  gap: 4px;
  width: 100%;
  height: 30px;
  padding-left: 20px;
  border-bottom: 1px solid #dedede;
  color: #555;
}
.search-row { display: flex; align-items: center; padding: 8px 10px 0 8px; }
.search {
  display: flex;
  align-items: center;
  width: 130px;
  height: 23px;
  padding-right: 6px;
  border: 1px solid #c0c0c0;
  border-radius: 2px;
}
.search input {
  flex: 1;
  min-width: 0;
  padding: 0 0 0 6px;
  border: 0;
  outline: 0;
  background: none;
  font: inherit;
}
.search input::placeholder { color: #999; opacity: 1; }
.plain { display: flex; margin-left: 4px; }
.bar { width: 1px; height: 18px; margin: 0 2px 0 5px; background: #d0d0d0; }
.plain.more { margin-left: 8px; color: #555; }
.data-pane h2 {
  padding: 8px 0 5px 18px;
  color: #000;
  font-size: 13px;
  font-weight: 600;
}
.fields li { display: flex; align-items: center; height: 21px; color: #222; white-space: nowrap; }
.fields b, .fields .hash { width: 26px; margin-left: 21px; color: #33749a; font-size: 9px; }
.fields .hash { padding-left: 2px; }
.measures { margin: 1px 6px 0 15px; border-top: 1px solid #d8d8d8; }
.measures .hash { margin-left: 6px; color: #3aa078; }

/* Cards */
.cards { flex: none; width: 166px; padding: 0 6px; display: flex; flex-direction: column; gap: 6px; }
.card { border: 1px solid #d0d0d0; background: #fafafa; padding: 7px 6px; color: #555; }
.pages { height: 62px; }
.filters { height: 78px; }
.marks { min-height: 264px; }
.marks .select-box { margin-top: 12px; }
.mark-buttons { display: grid; grid-template-columns: repeat(3, 1fr); gap: 6px; margin-top: 6px; }
.mark-buttons button {
  display: flex;
  flex-direction: column;
  align-items: center;
  gap: 5px;
  height: 42px;
  padding-top: 6px;
  border: 1px solid #cfcfcf;
  background: #fff;
  font-size: 9px;
  line-height: 12px;
  color: #444;
}
.mark-buttons .text-only { display: block; padding: 3px 0; }
.pills { margin-top: 9px; }
.pills li { display: flex; align-items: center; gap: 3px; height: 20px; margin: 0 4px 3px 6px; }
.pills .pill { flex: 1; }
.pill {
  display: inline-block;
  height: 20px;
  padding: 0 11px;
  border-radius: 10px;
  color: #fff;
  line-height: 19px;
}
.green { background: #00b180; }
.blue { background: #4996b2; }

/* Sheet */
.sheet { flex: 1; min-width: 0; display: flex; flex-direction: column; gap: 6px; padding-bottom: 6px; }
.shelf { height: 28px; border: 1px solid #d0d0d0; border-right: 0; background: #fafafa; color: #555; }
.shelf h3 {
  display: flex;
  align-items: center;
  gap: 6px;
  width: 125px;
  height: 26px;
  padding-left: 5px;
  border-right: 1px solid #d0d0d0;
}
.canvas {
  flex: 1;
  min-height: 0;
  display: flex;
  flex-direction: column;
  margin-right: 181px;
  padding: 10px 10px 27px 14px;
  border: 1px solid #d0d0d0;
  background: #fff;
}
.canvas h1 { margin: 0 0 12px -4px; font-size: 21px; line-height: 30px; font-weight: 300; color: #333; }
.treemap { flex: 1; display: flex; gap: 1px; min-height: 0; }
.row, .col { display: flex; gap: 1px; flex-basis: 0; min-width: 0; min-height: 0; }
.col { flex-direction: column; }
.cell {
  flex-basis: 0;
  min-width: 0;
  min-height: 0;
  background: #b9e4d8;
  color: #222;
  overflow: hidden;
}
.cell span { display: block; padding: 8px 7px 0; }
.navy { background: #2c5985; color: #e8eef4; }
.t1 { background: #95cfd0; }
.t2 { background: #9bd2d1; }
.t3 { background: #a0d5d1; }
.t4 { background: #aadbd5; }
.t5 { background: #afddd7; }

/* Show Me */
.show-me {
  position: absolute;
  top: 48px;
  right: 4px;
  bottom: 72px;
  width: 204px;
  display: flex;
  flex-direction: column;
  filter: drop-shadow(2px 2px 2px rgba(0, 0, 0, .3));
  color: #333;
}
.show-me-tab {
  display: flex;
  align-items: center;
  gap: 6px;
  align-self: flex-end;
  position: relative;
  width: 123px;
  height: 37px;
  margin-bottom: -1px;
  padding: 0 0 8px 11px;
  border: 1px solid #d4d4d4;
  border-bottom: 0;
  background: #fafafa;
  font-size: 13px;
}
.show-me-body { flex: 1; border: 1px solid #d4d4d4; background: #fafafa; padding: 14px 13px; }
.thumbs { display: grid; grid-template-columns: repeat(3, 1fr); gap: 4px; margin-bottom: 16px; }
.thumbs button { height: 42px; background: #fff; outline: 1px solid #d9d9d9; outline-offset: -1px; }
.thumbs svg { width: 100%; height: 100%; }
.thumbs .recommended { outline: 2px solid #ec8f4c; outline-offset: -2px; }
.thumbs .current { outline-color: #222; }
.tiny { font: italic 15px "Liberation Serif", serif; fill: #555; }
.show-me-body p { margin: 0 0 8px 2px; line-height: 20px; }
.show-me-body p:first-of-type { margin-bottom: 6px; }
.show-me-body strong { font-weight: 600; color: #111; }

/* Sheet tabs */
.sheet-tabs {
  flex: none;
  display: grid;
  grid-template-columns: 131px 66px 76px 92px 41px 102px 134px 128px 106px 149px 32px 32px 32px 1fr;
  height: 31px;
  border: solid #c8c8c8;
  border-width: 1px 0;
  background: #e5e5e5;
  color: #666;
}
.sheet-tabs button {
  display: flex;
  align-items: center;
  gap: 4px;
  padding-left: 5px;
  border-right: 1px solid #c8c8c8;
  text-align: left;
  white-space: nowrap;
}
.sheet-tabs .with-icon { padding-left: 7px; }
.sheet-tabs .on { background: #fafafa; font-weight: 600; color: #444; }
.sheet-tabs .add { padding: 0 0 0 8px; }

/* Status bar */
.status {
  flex: none;
  display: flex;
  align-items: center;
  height: 16px;
  padding-left: 3px;
  background: #eaeaea;
  color: #222;
  white-space: nowrap;
  font-size: 11px;
  line-height: 20px;
}
.status > span:not(.slot), .status button { padding-top: 3px; }
.marks-count { width: 69px; }
.dims { width: 113px; }
.status .user {
  display: flex;
  align-items: center;
  gap: 7px;
  width: 127px;
  height: 16px;
  margin-left: auto;
  padding-left: 6px;
  border-left: 1px solid #c8c8c8;
}
.user .drop { color: #000; }
.slot { width: 27px; height: 100%; border-left: 1px solid #c8c8c8; }
.slot.wide { width: 47px; }
.pager, .views { display: flex; align-items: center; height: 100%; border-left: 1px solid #c8c8c8; }
.pager { width: 71px; padding-left: 7px; gap: 8px; }
.views { width: 68px; padding-left: 8px; gap: 9px; }
```
